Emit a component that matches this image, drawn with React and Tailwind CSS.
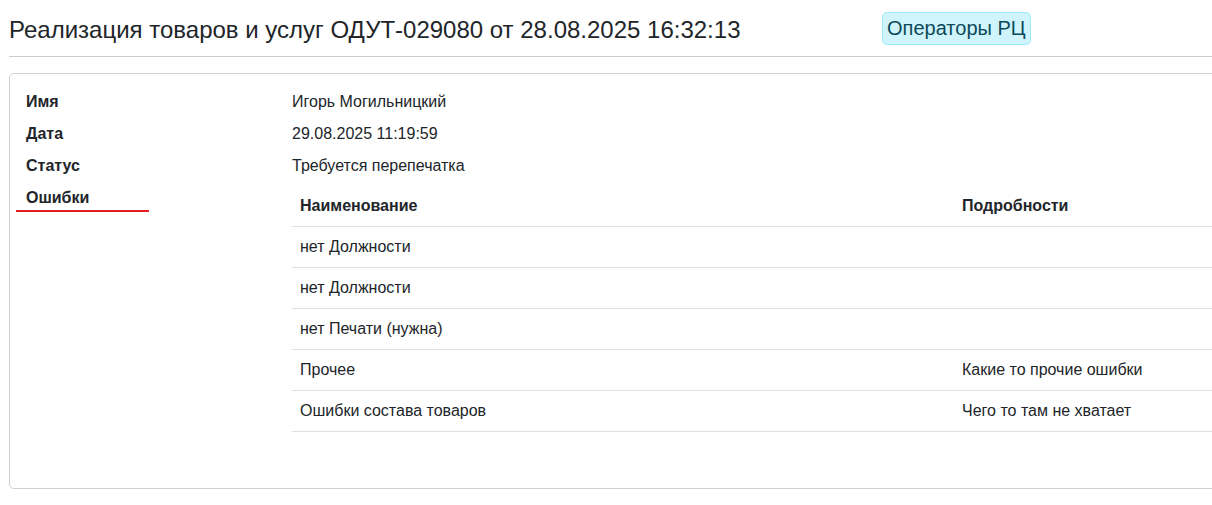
import React from 'react';

const FIELDS = [
    { label: 'Имя', value: 'Игорь Могильницкий' },
    { label: 'Дата', value: '29.08.2025 11:19:59' },
    { label: 'Статус', value: 'Требуется перепечатка' },
];

const ERRORS = [
    { name: 'нет Должности', details: '' },
    { name: 'нет Должности', details: '' },
    { name: 'нет Печати (нужна)', details: '' },
    { name: 'Прочее', details: 'Какие то прочие ошибки' },
    { name: 'Ошибки состава товаров', details: 'Чего то там не хватает' },
];

const App = () => {
    return (
        <div className="w-[1212px] h-[505px] overflow-hidden bg-white text-[#212529] font-['Liberation_Sans',Arial,sans-serif]">
            <div className="pl-[9px] w-[1240px]">
                {/* Header */}
                <div className="flex items-center h-[57px] border-b border-[#cccccc]">
                    <div className="w-[873px] text-[24px] leading-none pt-[4px]">
                        Реализация товаров и услуг ОДУТ-029080 от 28.08.2025 16:32:13
                    </div>
                    <span className="px-[4px] h-[33px] flex items-center text-[20px] leading-none text-[#0c4a5a] bg-[#cff4fc] border border-[#9eeaf9] rounded-[5px]">
                        Операторы РЦ
                    </span>
                </div>

                {/* Card */}
                <div className="mt-[16px] h-[416px] border border-[#d0d0d0] rounded-[5px] pl-[16px] pt-[12px] text-[16px]">
                    {FIELDS.map((f) => (
                        <div key={f.label} className="flex h-[32px] items-center">
                            <div className="w-[266px] font-bold">{f.label}</div>
                            <div>{f.value}</div>
                        </div>
                    ))}
                    <div className="flex">
                        <div className="w-[266px] h-[32px] flex flex-col justify-center relative">
                            <span className="font-bold">Ошибки</span>
                            <div className="absolute left-[-10px] top-[28px] w-[133px] h-[2px] bg-[#e31e24]"></div>
                        </div>
                        <div className="flex-1 pt-[4px]">
                            <div className="flex h-[41px] items-center border-b border-[#dee2e6] font-bold">
                                <div className="w-[670px] pl-[8px]">Наименование</div>
                                <div>Подробности</div>
                            </div>
                            {ERRORS.map((e, i) => (
                                <div key={i} className="flex h-[41px] items-center border-b border-[#dee2e6]">
                                    <div className="w-[670px] pl-[8px]">{e.name}</div>
                                    <div>{e.details}</div>
                                </div>
                            ))}
                        </div>
                    </div>
                </div>
            </div>
        </div>
    );
};

export default App;
